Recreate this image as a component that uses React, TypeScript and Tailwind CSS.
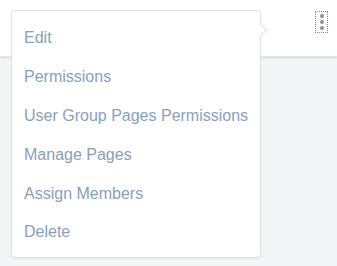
import React from 'react';

const items = ['Edit', 'Permissions', 'User Group Pages Permissions', 'Manage Pages', 'Assign Members', 'Delete'];

export default function App() {
  return (
    <div className="relative w-[337px] h-[266px] overflow-hidden bg-[#f4f5f7]" style={{ fontFamily: "'Liberation Sans', Arial, sans-serif" }}>
      <div className="h-[57px] bg-white shadow-[0_1px_2px_rgba(0,0,0,0.12)] border-b border-[#e4e6ea] flex justify-end items-start pr-[9px] pt-[11px]">
        <button className="w-[13px] h-[22px] border border-dotted border-[#7a8ca3] flex flex-col items-center justify-center gap-[2px]">
          <span className="w-[4px] h-[4px] rounded-full bg-[#8293a8]" />
          <span className="w-[4px] h-[4px] rounded-full bg-[#8293a8]" />
          <span className="w-[4px] h-[4px] rounded-full bg-[#8293a8]" />
        </button>
      </div>

      {/* dropdown menu */}
      <div className="absolute left-[11px] top-[10px] w-[250px] bg-white border border-[#dfe2e7] rounded-[4px] shadow-[0_1px_2px_rgba(0,0,0,0.06)] pt-[8px] pb-[5px]">
        <div className="absolute right-[-5px] top-[14px] w-[10px] h-[10px] bg-white border-t border-r border-[#dfe2e7] rotate-45" />
        {items.map((label) => (
          <div key={label} className="h-[38.8px] flex items-center px-[12px] text-[16px] text-[#89a0bc] whitespace-nowrap">
            {label}
          </div>
        ))}
      </div>
    </div>
  );
}
